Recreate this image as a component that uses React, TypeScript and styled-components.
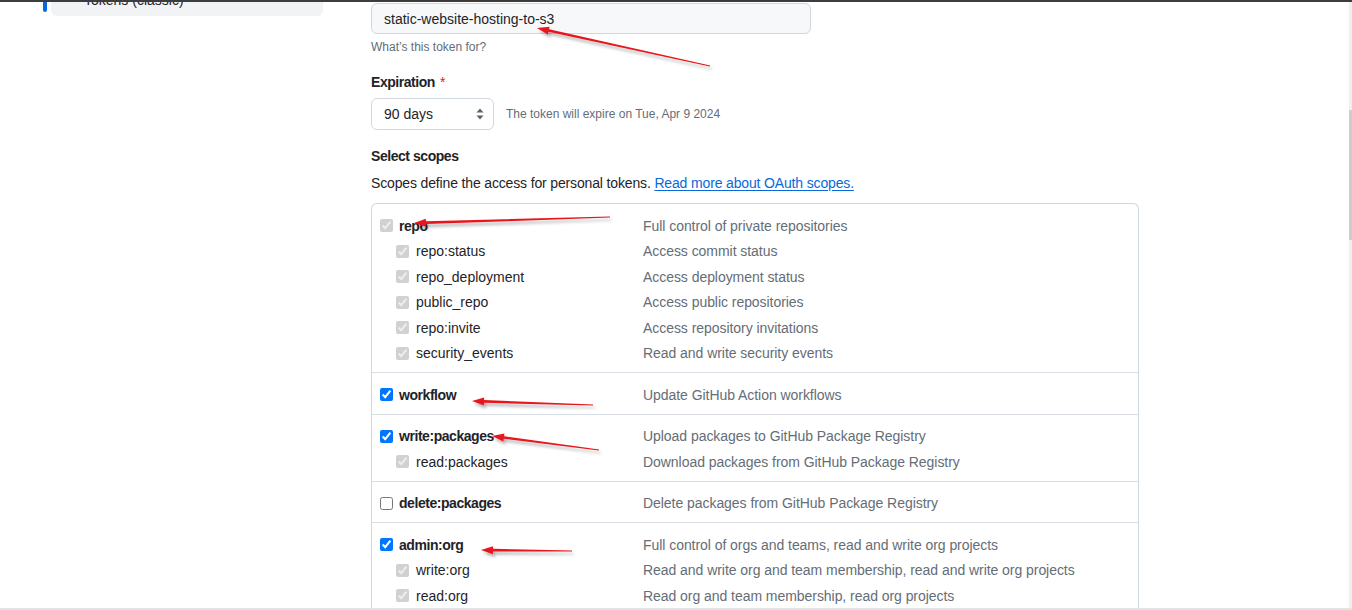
import React from "react";
import styled, { createGlobalStyle } from "styled-components";

const GlobalStyle = createGlobalStyle`
  html, body { margin: 0; padding: 0; background: #ffffff; overflow: hidden; }
  body { font-family: "Liberation Sans", Arial, sans-serif; color: #1f2328; }
  * { box-sizing: border-box; }
`;

const Frame = styled.div`
  position: relative;
  width: 1352px;
  height: 610px;
  display: flex;
  flex-direction: column;
  overflow: hidden;
  background: #ffffff;
`;

const TopEdge = styled.div`
  flex: none;
  height: 2px;
  background: #3d3d3d;
`;

const BottomEdge = styled.div`
  flex: none;
  height: 2px;
  background: #e2e2e2;
`;

const Viewport = styled.div`
  flex: 1;
  display: flex;
  min-height: 0;
`;

const Page = styled.div`
  flex: 1;
  overflow: hidden;
`;

const ScrollTrack = styled.div`
  flex: none;
  width: 3px;
  background: #efefef;
  padding-top: 108px;
`;

const ScrollThumb = styled.div`
  height: 130px;
  background: #cdcdcd;
`;

const Layout = styled.div`
  display: flex;
  align-items: flex-start;
  gap: 48px;
  padding-left: 51px;
`;

const Sidebar = styled.nav`
  flex: none;
  width: 272px;
  margin-top: -18px;
`;

const NavItem = styled.div`
  position: relative;
  height: 32px;
  padding-left: 33px;
  border-radius: 6px;
  background: #f2f3f5;
  font-size: 14px;
  line-height: 32px;
  color: #1f2328;
`;

const ActiveBar = styled.span`
  position: absolute;
  left: -8px;
  top: 4px;
  width: 4px;
  height: 24px;
  border-radius: 6px;
  background: #0969da;
`;

const Main = styled.main`
  flex: none;
  width: 768px;
  padding-top: 1px;
  display: flex;
  flex-direction: column;
`;

const TextInput = styled.input`
  display: block;
  width: 440px;
  height: 31px;
  padding: 0 12px;
  font-family: "Liberation Sans", Arial, sans-serif;
  font-size: 14px;
  color: #1f2328;
  background: #f6f8fa;
  border: 1px solid #d0d7de;
  border-radius: 6px;
  outline: none;
`;

const Note = styled.div<{ $inline?: boolean }>`
  font-size: 12px;
  line-height: 18px;
  color: #656d76;
  margin-top: ${(p) => (p.$inline ? "0" : "4px")};
`;

const FieldLabel = styled.div<{ $gap: number }>`
  font-size: 14px;
  font-weight: 700;
  line-height: 20px;
  letter-spacing: -0.45px;
  color: #1f2328;
  margin-top: ${(p) => p.$gap}px;
`;

const Required = styled.span`
  color: #d1242f;
  font-weight: 400;
  margin-left: 5px;
`;

const SelectRow = styled.div`
  display: flex;
  align-items: center;
  gap: 12px;
  margin-top: 6px;
`;

const SelectBox = styled.div`
  width: 123px;
  height: 32px;
  display: flex;
  align-items: center;
  justify-content: space-between;
  padding: 0 9px 0 12px;
  border: 1px solid #d0d7de;
  border-radius: 6px;
  background: #ffffff;
  font-size: 14px;
  color: #1f2328;
`;

const Paragraph = styled.p`
  margin: 7px 0 0;
  font-size: 14px;
  line-height: 20px;
  letter-spacing: -0.15px;
  color: #1f2328;
`;

const Link = styled.a`
  color: #0969da;
  text-decoration: underline;
  text-underline-offset: 2px;
`;

const ScopeBox = styled.div`
  margin-top: 10px;
  border: 1px solid #d0d7de;
  border-radius: 6px;
  border-bottom: none;
  border-bottom-left-radius: 0;
  border-bottom-right-radius: 0;
`;

const ScopeGroup = styled.div<{ $first?: boolean }>`
  padding: 9px 8px 6px;
  border-top: ${(p) => (p.$first ? "none" : "1px solid #d8dee4")};
`;

const ScopeRow = styled.div`
  display: grid;
  grid-template-columns: 263px 1fr;
  align-items: center;
  height: 25.5px;
`;

const ScopeName = styled.label<{ $sub?: boolean }>`
  display: flex;
  align-items: center;
  gap: ${(p) => (p.$sub ? "7px" : "6px")};
  padding-left: ${(p) => (p.$sub ? "16px" : "0")};
  font-size: 14px;
  font-weight: ${(p) => (p.$sub ? 400 : 700)};
  letter-spacing: ${(p) => (p.$sub ? "0" : "-0.45px")};
  color: #1f2328;
  white-space: nowrap;
`;

const Check = styled.input`
  margin: 0;
  width: 13px;
  height: 13px;
  flex: none;
`;

const ScopeDesc = styled.span`
  font-size: 14px;
  letter-spacing: -0.05px;
  color: #656d76;
  white-space: nowrap;
`;

const Overlay = styled.svg`
  position: absolute;
  left: 0;
  top: 0;
  pointer-events: none;
`;

type Scope = { name: string; desc: string; state: "on" | "off" | "sub" };
type Group = { top: Scope; subs: Scope[] };

const groups: Group[] = [
  {
    top: { name: "repo", desc: "Full control of private repositories", state: "sub" },
    subs: [
      { name: "repo:status", desc: "Access commit status", state: "sub" },
      { name: "repo_deployment", desc: "Access deployment status", state: "sub" },
      { name: "public_repo", desc: "Access public repositories", state: "sub" },
      { name: "repo:invite", desc: "Access repository invitations", state: "sub" },
      { name: "security_events", desc: "Read and write security events", state: "sub" },
    ],
  },
  {
    top: { name: "workflow", desc: "Update GitHub Action workflows", state: "on" },
    subs: [],
  },
  {
    top: { name: "write:packages", desc: "Upload packages to GitHub Package Registry", state: "on" },
    subs: [{ name: "read:packages", desc: "Download packages from GitHub Package Registry", state: "sub" }],
  },
  {
    top: { name: "delete:packages", desc: "Delete packages from GitHub Package Registry", state: "off" },
    subs: [],
  },
  {
    top: { name: "admin:org", desc: "Full control of orgs and teams, read and write org projects", state: "on" },
    subs: [
      { name: "write:org", desc: "Read and write org and team membership, read and write org projects", state: "sub" },
      { name: "read:org", desc: "Read org and team membership, read org projects", state: "sub" },
    ],
  },
];

const Row = ({ scope, sub }: { scope: Scope; sub?: boolean }) => (
  <ScopeRow>
    <ScopeName $sub={sub}>
      <Check
        type="checkbox"
        readOnly
        checked={scope.state !== "off"}
        disabled={scope.state === "sub"}
      />
      {scope.name}
    </ScopeName>
    <ScopeDesc>{scope.desc}</ScopeDesc>
  </ScopeRow>
);

const SortIcon = () => (
  <svg width="8" height="12" viewBox="0 0 8 12" aria-hidden>
    <path d="M4 0.5 L7.5 4.5 H0.5 Z" fill="#59636e" />
    <path d="M4 11.5 L7.5 7.5 H0.5 Z" fill="#59636e" />
  </svg>
);

const arrows = [
  { x1: 710, y1: 66, x2: 537, y2: 28 },
  { x1: 610, y1: 217, x2: 414, y2: 223 },
  { x1: 593, y1: 405, x2: 472, y2: 401 },
  { x1: 599, y1: 450, x2: 492, y2: 436 },
  { x1: 572, y1: 551, x2: 481, y2: 550 },
];

function arrowPoints(a: { x1: number; y1: number; x2: number; y2: number }) {
  const dx = a.x2 - a.x1;
  const dy = a.y2 - a.y1;
  const len = Math.hypot(dx, dy);
  const ux = dx / len;
  const uy = dy / len;
  const nx = -uy;
  const ny = ux;
  const headLen = 12;
  const headW = 4;
  const tailW = 0.6;
  const neckW = 1.3;
  const bx = a.x2 - ux * headLen;
  const by = a.y2 - uy * headLen;
  const p = (x: number, y: number) => `${x.toFixed(2)},${y.toFixed(2)}`;
  return [
    p(a.x1 + nx * tailW, a.y1 + ny * tailW),
    p(bx + nx * neckW, by + ny * neckW),
    p(bx + nx * headW, by + ny * headW),
    p(a.x2, a.y2),
    p(bx - nx * headW, by - ny * headW),
    p(bx - nx * neckW, by - ny * neckW),
    p(a.x1 - nx * tailW, a.y1 - ny * tailW),
  ].join(" ");
}

const Annotations = () => (
  <Overlay width="1352" height="610" viewBox="0 0 1352 610">
    <defs>
      <filter id="arrowShadow" x="-10%" y="-50%" width="120%" height="200%">
        <feDropShadow dx="2" dy="3" stdDeviation="1.5" floodColor="#000" floodOpacity="0.3" />
      </filter>
    </defs>
    {arrows.map((a, i) => (
      <polygon key={i} points={arrowPoints(a)} fill="#e8151b" filter="url(#arrowShadow)" />
    ))}
  </Overlay>
);

export default function App() {
  return (
    <Frame>
      <GlobalStyle />
      <TopEdge />
      <Viewport>
        <Page>
          <Layout>
            <Sidebar>
              <NavItem>
                <ActiveBar />
                Tokens (classic)
              </NavItem>
            </Sidebar>
            <Main>
              <TextInput defaultValue="static-website-hosting-to-s3" />
              <Note>What’s this token for?</Note>
              <FieldLabel $gap={16}>
                Expiration<Required>*</Required>
              </FieldLabel>
              <SelectRow>
                <SelectBox>
                  <span>90 days</span>
                  <SortIcon />
                </SelectBox>
                <Note $inline>The token will expire on Tue, Apr 9 2024</Note>
              </SelectRow>
              <FieldLabel $gap={16}>Select scopes</FieldLabel>
              <Paragraph>
                Scopes define the access for personal tokens. <Link href="#">Read more about OAuth scopes.</Link>
              </Paragraph>
              <ScopeBox>
                {groups.map((g, i) => (
                  <ScopeGroup key={g.top.name} $first={i === 0}>
                    <Row scope={g.top} />
                    {g.subs.map((s) => (
                      <Row key={s.name} scope={s} sub />
                    ))}
                  </ScopeGroup>
                ))}
              </ScopeBox>
            </Main>
          </Layout>
        </Page>
        <ScrollTrack>
          <ScrollThumb />
        </ScrollTrack>
      </Viewport>
      <BottomEdge />
      <Annotations />
    </Frame>
  );
}
